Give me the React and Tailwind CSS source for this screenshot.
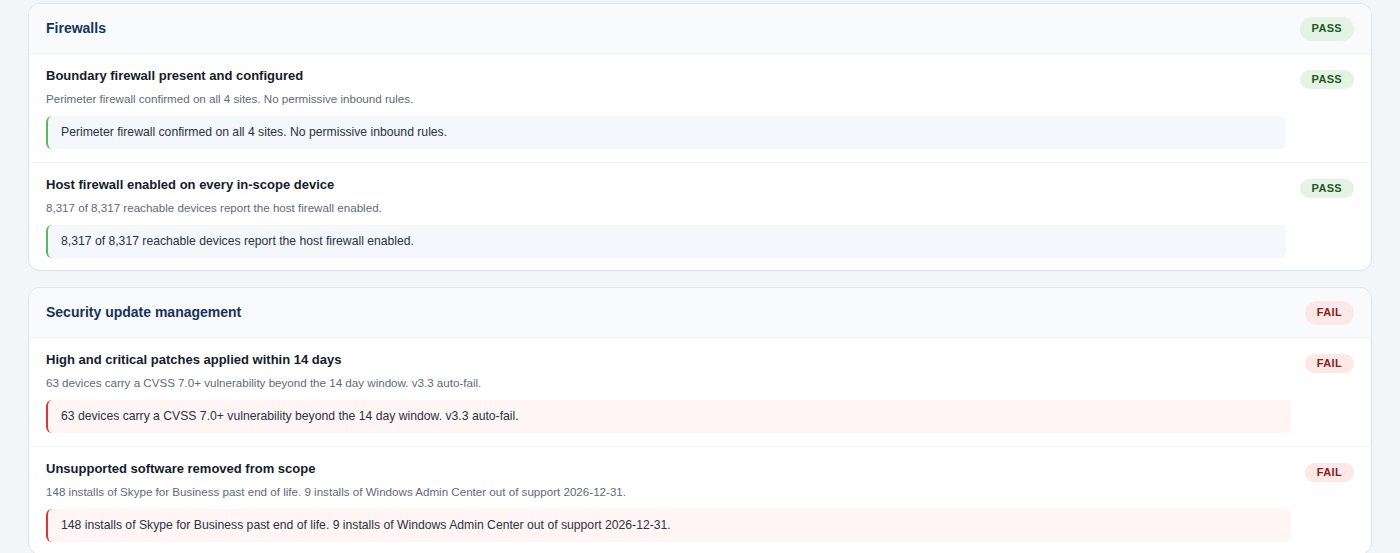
const sections = [
  {
    title: "Firewalls",
    status: "pass",
    checks: [
      {
        title: "Boundary firewall present and configured",
        detail: "Perimeter firewall confirmed on all 4 sites. No permissive inbound rules.",
        status: "pass",
      },
      {
        title: "Host firewall enabled on every in-scope device",
        detail: "8,317 of 8,317 reachable devices report the host firewall enabled.",
        status: "pass",
      },
    ],
  },
  {
    title: "Security update management",
    status: "fail",
    checks: [
      {
        title: "High and critical patches applied within 14 days",
        detail: "63 devices carry a CVSS 7.0+ vulnerability beyond the 14 day window. v3.3 auto-fail.",
        status: "fail",
      },
      {
        title: "Unsupported software removed from scope",
        detail: "148 installs of Skype for Business past end of life. 9 installs of Windows Admin Center out of support 2026-12-31.",
        status: "fail",
      },
    ],
  },
]

const Badge = ({ status, large }) => (
  <span
    className={
      "inline-flex items-center justify-center rounded-full font-bold tracking-[0.03em] text-[11px] leading-none px-[12px] " +
      (large ? "h-6 " : "h-[19px] ") +
      (status === "pass" ? "bg-[#e4f3e3] text-[#1f5a26]" : "bg-[#fce8e7] text-[#8a1c1c]")
    }
  >
    {status === "pass" ? "PASS" : "FAIL"}
  </span>
)

const Check = ({ check }) => (
  <div className="flex gap-[14px] border-t border-[#eef2f6] px-[17px] pt-3 pb-[13px] last:pb-3">
    <div className="min-w-0 flex-1">
      <div className="text-[13px] leading-5 font-bold text-[#141c2c]">{check.title}</div>
      <div className="mt-1 text-[11.6px] leading-[18px] text-[#5f6a79]">{check.detail}</div>
      <div
        className={
          "mt-2 rounded-md border-l-2 px-[13px] py-[7px] text-[12.2px] leading-[19px] text-[#2b3340] " +
          (check.status === "pass" ? "border-[#5cb860] bg-[#f4f7fb]" : "border-[#d8363b] bg-[#fff5f4]")
        }
      >
        {check.detail}
      </div>
    </div>
    <div className="flex items-start pt-[4px]">
      <Badge status={check.status} />
    </div>
  </div>
)

export default function App() {
  return (
    <div
      className="min-h-screen bg-[#f2f6f9] px-[28px] pt-[3px] pb-6"
      style={{ fontFamily: '"Liberation Sans", Arial, sans-serif' }}
    >
      <div className="flex flex-col gap-4">
        {sections.map((s) => (
          <div key={s.title} className="overflow-hidden rounded-xl border border-[#dbe4ec] bg-white">
            <div className="flex h-[49px] items-center justify-between bg-[#f8fafc] px-[17px]">
              <span className="text-[14px] font-bold text-[#163458]">{s.title}</span>
              <Badge status={s.status} large />
            </div>
            {s.checks.map((c) => (
              <Check key={c.title} check={c} />
            ))}
          </div>
        ))}
      </div>
    </div>
  )
}
